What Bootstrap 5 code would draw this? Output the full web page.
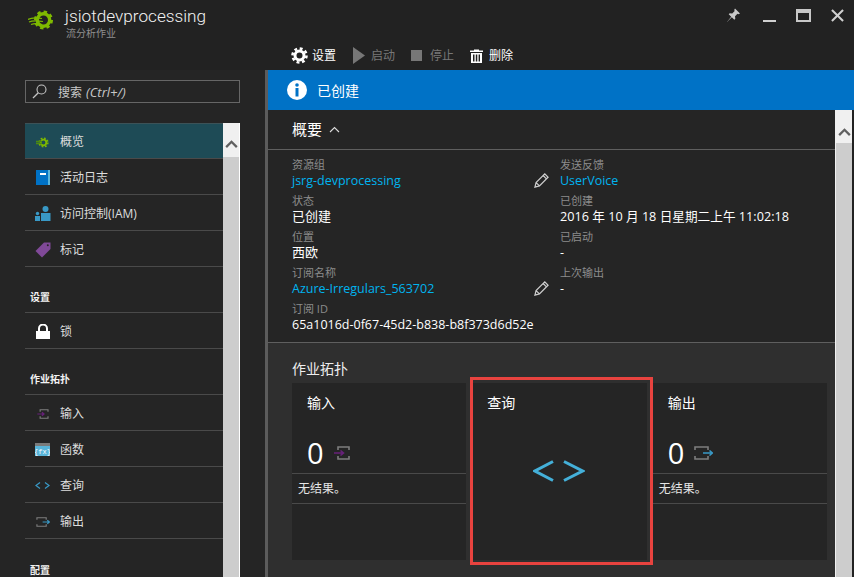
<!DOCTYPE html>
<html lang="zh-CN">
<head>
    <meta charset="UTF-8">
    <meta name="viewport" content="width=device-width, initial-scale=1.0">
    <title>jsiotdevprocessing</title>
    <link href="https://cdn.jsdelivr.net/npm/bootstrap@5.3.0/dist/css/bootstrap.min.css" rel="stylesheet">
    <style>
        html, body { height: 100%; overflow: hidden; }
        body {
            background: #222;
            color: #fff;
            font-family: "Open Sans", "Noto Sans CJK SC", sans-serif;
            font-size: 13px;
            line-height: 18px;
        }
        svg { display: block; flex: none; }

        .top-bar { height: 70px; }
        .title-row { height: 43px; padding: 10px 0 0 28px; }
        .res-name { font-family: Roboto, sans-serif; font-weight: 300; font-size: 17.2px; line-height: 22px; margin-left: 12px; margin-top: -5px; color: #f2f2f2; }
        .res-type { font-size: 10px; line-height: 12px; margin-left: 13px; color: #8f8f8f; }
        .win-btns { gap: 20px; padding: 0 10px 0 0; margin-top: -2px; }
        .win-pin { margin-right: 2px; }
        .cmd-row { height: 25px; padding-left: 291px; font-size: 12px; gap: 16px; }
        .cmd-off { color: #777; }
        .cmd-gap { gap: 6px; }
        .cmd-play { margin-left: 1px; }

        .side-col { width: 265px; padding-left: 25px; background: #252525; }
        .blade-rule { width: 3px; background: #5c5c5c; }
        .side-search {
            width: 215px; height: 23px; margin: 10px 0 20px;
            border: 1px solid #666; padding-left: 6px; font-size: 12px; color: #c8c8c8;
        }
        .side-search i { font-size: 13px; margin-left: 4px; }
        .search-text { padding-top: 1px; margin-left: 3px; }
        .side-body { width: 215px; }
        .side-list { width: 198px; flex-wrap: nowrap; }
        .side-list .list-group-item {
            background: transparent; color: #ddd; border: 0; border-bottom: 1px solid #4a4a4a;
            border-radius: 0; height: 36px; padding: 2px 0 0 5px; font-size: 12px; flex: none;
        }
        .side-list .list-group-item.active { background: #1e4b56; border-top: 1px solid #3c5257; height: 36px; }
        .side-list .side-head {
            height: 46px; padding: 0 0 6px 5px; font-size: 10px; font-weight: 700; color: #f2f2f2;
        }
        .side-icon { width: 25px; margin-right: 5px; }
        .scroll-rail { width: 17px; background: #cdcdcd; border-right: 1px solid #fff; }
        .scroll-cap { background: #f0f0f0; }
        .side-rail .scroll-cap { height: 34px; padding-top: 17px; }
        .main-rail { margin-right: 2px; border-left: 1px solid #f0f0f0; border-right: 0; }
        .main-rail .scroll-cap { height: 33px; padding-top: 18px; }

        .info-bar { height: 40px; background: #0072c6; padding-left: 19px; font-size: 14px; gap: 10px; }
        .info-text { padding-top: 2px; }
        .main-pane { background: #252525; }
        .sum-head { height: 40px; padding: 0 0 1px 24px; border-bottom: 1px solid #5f5f5f; font-size: 15px; gap: 7px; }
        .sum-body { height: 193px; padding: 6px 0 0 24px; border-bottom: 1px solid #5f5f5f; }
        .sum-left { width: 268px; padding-right: 11px; }
        .field-label { font-size: 11px; line-height: 17px; color: #8c8c8c; height: 16px; }
        .field-value { height: 20px; line-height: 17px; font-size: 12.5px; white-space: nowrap; }
        .field-cjk { font-size: 13px; }
        .field-date { font-size: 12.67px; }
        .azure-link { color: #00b4f0; text-decoration: none; }
        .edit-icon { margin-top: 1px; }

        .topo-pane { background: #2f2f2f; padding: 17px 0 0 24px; }
        .topo-title { font-size: 14px; margin-bottom: 5px; color: #eee; }
        .topo-tiles { width: 535px; height: 177px; gap: 6px; }
        .topo-tile { flex: 1 1 0; background: #252525; }
        .tile-name { font-size: 14px; padding: 11px 0 0 15px; }
        .tile-count { height: 61px; padding-left: 15px; font-size: 29px; gap: 10px; padding-top: 21px; color: #fff; }
        .tile-empty { margin-top: 0; height: 31px; padding-left: 6px; font-size: 12px; color: #e6e6e6; border-top: 1px solid #4a4a4a; border-bottom: 1px solid #4a4a4a; }
        .query-mark { height: 118px; }
        .red-box {
            position: absolute; left: 178px; top: -6px; width: 183px; height: 188px;
            border: 3px solid #e8433f; pointer-events: none;
        }
    </style>
</head>
<body class="d-flex flex-column">
    <svg width="0" height="0" class="position-absolute">
        <defs>
            <symbol id="ico-pencil" viewBox="0 0 16 16">
                <path d="M1 15l1.200-4.800L11.500 1 15 4.500 5.800 13.800zM2.200 10.200l3.600 3.600M9.800 2.700l3.500 3.500" fill="none" stroke="#cfcfcf" stroke-width="1.300"/>
            </symbol>
            <symbol id="ico-input" viewBox="0 0 16 14">
                <path d="M4 4V1h11v3M4 10v3h11v-3" fill="none" stroke="#7d7d7d" stroke-width="1.600"/>
                <path d="M0 7h9M6.500 4.500L9.500 7l-3 2.500" fill="none" stroke="#68217a" stroke-width="1.600"/>
            </symbol>
            <symbol id="ico-output" viewBox="0 0 19 14">
                <path d="M14 4V1H1v3M1 10v3h13v-3" fill="none" stroke="#7d7d7d" stroke-width="1.600"/>
                <path d="M9 7h9M15.500 4.500L18.500 7l-3 2.500" fill="none" stroke="#3999c6" stroke-width="1.600"/>
            </symbol>
            <symbol id="ico-up" viewBox="0 0 14 9">
                <path d="M1 8l6-6 6 6" fill="none" stroke="#606060" stroke-width="2.600"/>
            </symbol>
        </defs>
    </svg>

    <header class="top-bar flex-shrink-0">
        <div class="title-row d-flex align-items-start">
            <svg width="25" height="20" viewBox="0 0 25 20">
                <circle cx="15.500" cy="10" r="6.200" fill="none" stroke="#7fba00" stroke-width="3.400"/>
                <circle cx="15.500" cy="10" r="8.300" fill="none" stroke="#7fba00" stroke-width="2.400" stroke-dasharray="3.400 3.100"/>
                <path d="M0 9.500c4-2.500 8-2 14-1M1 12c4-2 8-1.500 14-.5M3 14.500c4-1.500 7-1 11 0" fill="none" stroke="#7fba00" stroke-width="1.200"/>
            </svg>
            <div class="flex-grow-1">
                <div class="res-name">jsiotdevprocessing</div>
                <div class="res-type">流分析作业</div>
            </div>
            <div class="win-btns d-flex align-items-center">
                <svg class="win-pin" width="15" height="15" viewBox="0 0 15 15">
                    <path d="M9 .500l5 5-1.500.8-1-.5-2.500 2.500.3 2.500-1 1-2.500-2.500L1 14l4.200-5.300-2.500-2.500 1-1 2.500.3L8.700 3l-.5-1z" fill="#c8c8c8"/>
                </svg>
                <svg width="13" height="15" viewBox="0 0 13 15"><path d="M0 12h13v2H0z" fill="#d0d0d0"/></svg>
                <svg width="15" height="13" viewBox="0 0 15 13"><path fill-rule="evenodd" d="M0 0h15v13H0zM2 4v7h11V4z" fill="#c8c8c8"/></svg>
                <svg width="13" height="13" viewBox="0 0 14 14"><path d="M1 1l12 12M13 1L1 13" stroke="#d0d0d0" stroke-width="2.200"/></svg>
            </div>
        </div>
        <div class="cmd-row d-flex align-items-center">
            <span class="d-flex align-items-center gap-1">
                <svg width="17" height="17" viewBox="0 0 17 17">
                    <circle cx="8.500" cy="8.500" r="4.500" fill="none" stroke="#fff" stroke-width="3"/>
                    <circle cx="8.500" cy="8.500" r="7" fill="none" stroke="#fff" stroke-width="2.600" stroke-dasharray="2.900 2.600"/>
                </svg>
                设置
            </span>
            <span class="d-flex align-items-center cmd-gap cmd-off cmd-play">
                <svg width="12" height="17" viewBox="0 0 12 17"><path d="M0 0l12 8.500L0 17z" fill="#777"/></svg>
                启动
            </span>
            <span class="d-flex align-items-center gap-2 cmd-off">
                <svg width="11" height="11" viewBox="0 0 11 11"><path d="M0 0h11v11H0z" fill="#777"/></svg>
                停止
            </span>
            <span class="d-flex align-items-center cmd-gap">
                <svg width="13" height="14" viewBox="0 0 13 14">
                    <path d="M4 1.500V.500h5v1h4v1.500H0V1.500zM1 4h11v10H1zM3 5.500v7h1.500v-7zM5.800 5.500v7h1.500v-7zM8.600 5.500v7H10v-7z" fill="#fff" fill-rule="evenodd"/>
                </svg>
                删除
            </span>
        </div>
    </header>

    <div class="d-flex flex-grow-1 overflow-hidden">
        <aside class="side-col flex-shrink-0 d-flex flex-column">
            <div class="side-search d-flex align-items-center flex-shrink-0">
                <svg width="15" height="15" viewBox="0 0 15 15" class="me-2">
                    <circle cx="9.500" cy="5.500" r="4.500" fill="none" stroke="#c4c4c4" stroke-width="1.100"/>
                    <path d="M6.300 8.700L1 14" stroke="#c4c4c4" stroke-width="1.300"/>
                </svg>
                <span class="search-text">搜索<i>(Ctrl+/)</i></span>
            </div>
            <div class="side-body d-flex flex-grow-1 overflow-hidden">
                <div class="side-list list-group list-group-flush flex-shrink-0">
                    <a class="list-group-item active d-flex align-items-center">
                        <span class="side-icon d-flex justify-content-center">
                            <svg width="13" height="11" viewBox="0 0 13 11">
                                <circle cx="7.500" cy="5.500" r="2.800" fill="none" stroke="#7fba00" stroke-width="1.800"/>
                                <circle cx="7.500" cy="5.500" r="4.400" fill="none" stroke="#7fba00" stroke-width="1.400" stroke-dasharray="1.800 1.650"/>
                                <path d="M0 4.500h6M0 6.500h6" stroke="#4c8a10" stroke-width="1.300"/>
                            </svg>
                        </span>概览
                    </a>
                    <a class="list-group-item d-flex align-items-center">
                        <span class="side-icon d-flex justify-content-center">
                            <svg width="14" height="15" viewBox="0 0 14 15">
                                <path d="M0 0h14v15H0z" fill="#0072c6"/>
                                <path d="M12 0h2v15h-2z" fill="#59b4d9"/>
                                <path d="M4 3h6v2H4z" fill="#fff"/>
                            </svg>
                        </span>活动日志
                    </a>
                    <a class="list-group-item d-flex align-items-center">
                        <span class="side-icon d-flex justify-content-center">
                            <svg width="16" height="15" viewBox="0 0 16 15">
                                <circle cx="10.500" cy="3" r="3" fill="#3999c6"/>
                                <path d="M6 7h9.500v8H6zM10 7h1.500l-.7 3z" fill="#3999c6"/>
                                <circle cx="2.500" cy="7.500" r="1.700" fill="#3999c6"/>
                                <path d="M0 10h5v5H0z" fill="#3999c6"/>
                            </svg>
                        </span>访问控制(IAM)
                    </a>
                    <a class="list-group-item d-flex align-items-center">
                        <span class="side-icon d-flex justify-content-center">
                            <svg width="16" height="16" viewBox="0 0 16 16">
                                <path d="M9 .500h6.500V7L7 15.500.500 9z" fill="#804998"/>
                                <circle cx="12.800" cy="3.200" r="1" fill="#252525"/>
                            </svg>
                        </span>标记
                    </a>
                    <div class="list-group-item side-head d-flex align-items-end">设置</div>
                    <a class="list-group-item d-flex align-items-center">
                        <span class="side-icon d-flex justify-content-center">
                            <svg width="14" height="15" viewBox="0 0 14 15">
                                <path d="M3 7V4.500a4 4 0 0 1 8 0V7" fill="none" stroke="#fff" stroke-width="2"/>
                                <path d="M0 7h14v8H0z" fill="#fff"/>
                            </svg>
                        </span>锁
                    </a>
                    <div class="list-group-item side-head d-flex align-items-end">作业拓扑</div>
                    <a class="list-group-item d-flex align-items-center">
                        <span class="side-icon d-flex justify-content-center">
                            <svg width="12" height="10"><use href="#ico-input"/></svg>
                        </span>输入
                    </a>
                    <a class="list-group-item d-flex align-items-center">
                        <span class="side-icon d-flex justify-content-center">
                            <svg width="15" height="13" viewBox="0 0 15 13">
                                <path d="M0 0h15v3H0z" fill="#7a7a7a"/>
                                <path d="M0 3h15v10H0z" fill="#59b4d9"/>
                                <text x="7.500" y="10.500" font-size="7" fill="#fff" text-anchor="middle" font-family="Liberation Mono, monospace">{fx}</text>
                            </svg>
                        </span>函数
                    </a>
                    <a class="list-group-item d-flex align-items-center">
                        <span class="side-icon d-flex justify-content-center">
                            <svg width="15" height="7" viewBox="0 0 15 7">
                                <path d="M5 .500L1 3.500l4 3M10 .500l4 3-4 3" fill="none" stroke="#3999c6" stroke-width="1.200"/>
                            </svg>
                        </span>查询
                    </a>
                    <a class="list-group-item d-flex align-items-center">
                        <span class="side-icon d-flex justify-content-center">
                            <svg width="14" height="10"><use href="#ico-output"/></svg>
                        </span>输出
                    </a>
                    <div class="list-group-item side-head d-flex align-items-end border-0">配置</div>
                </div>
                <div class="scroll-rail side-rail flex-shrink-0">
                    <div class="scroll-cap d-flex justify-content-center">
                        <svg width="13" height="8"><use href="#ico-up"/></svg>
                    </div>
                </div>
            </div>
        </aside>
        <div class="blade-rule flex-shrink-0"></div>

        <main class="flex-grow-1 d-flex flex-column overflow-hidden">
            <div class="info-bar d-flex align-items-center flex-shrink-0">
                <svg width="20" height="20" viewBox="0 0 20 20">
                    <circle cx="10" cy="10" r="10" fill="#fff"/>
                    <path d="M8.500 8h3v8.500h-3z" fill="#0072c6"/>
                    <circle cx="10" cy="5" r="1.800" fill="#0072c6"/>
                </svg>
                <span class="info-text">已创建</span>
            </div>
            <div class="d-flex flex-grow-1 overflow-hidden">
                <div class="flex-grow-1 d-flex flex-column main-pane">
                    <div class="sum-head d-flex align-items-center flex-shrink-0">
                        概要
                        <svg width="11" height="7" viewBox="0 0 11 7"><path d="M1 6l4.500-4.500L10 6" fill="none" stroke="#ddd" stroke-width="1.100"/></svg>
                    </div>
                    <div class="sum-body d-flex flex-shrink-0">
                        <div class="sum-left flex-shrink-0">
                            <div class="field-label">资源组</div>
                            <div class="field-value d-flex justify-content-between align-items-start">
                                <a class="azure-link" href="#">jsrg-devprocessing</a>
                                <svg class="edit-icon" width="15" height="15"><use href="#ico-pencil"/></svg>
                            </div>
                            <div class="field-label">状态</div>
                            <div class="field-value field-cjk">已创建</div>
                            <div class="field-label">位置</div>
                            <div class="field-value field-cjk">西欧</div>
                            <div class="field-label">订阅名称</div>
                            <div class="field-value d-flex justify-content-between align-items-start">
                                <a class="azure-link" href="#">Azure-Irregulars_563702</a>
                                <svg class="edit-icon" width="15" height="15"><use href="#ico-pencil"/></svg>
                            </div>
                            <div class="field-label">订阅 ID</div>
                            <div class="field-value">65a1016d-0f67-45d2-b838-b8f373d6d52e</div>
                        </div>
                        <div>
                            <div class="field-label">发送反馈</div>
                            <div class="field-value"><a class="azure-link" href="#">UserVoice</a></div>
                            <div class="field-label">已创建</div>
                            <div class="field-value field-date">2016 年 10 月 18 日星期二上午 11:02:18</div>
                            <div class="field-label">已启动</div>
                            <div class="field-value">-</div>
                            <div class="field-label">上次输出</div>
                            <div class="field-value">-</div>
                        </div>
                    </div>
                    <div class="topo-pane flex-grow-1">
                        <div class="topo-title">作业拓扑</div>
                        <div class="topo-tiles d-flex position-relative">
                            <div class="topo-tile">
                                <div class="tile-name">输入</div>
                                <div class="tile-count d-flex align-items-center">0 <svg width="16" height="14"><use href="#ico-input"/></svg></div>
                                <div class="tile-empty d-flex align-items-center">无结果。</div>
                            </div>
                            <div class="topo-tile">
                                <div class="tile-name">查询</div>
                                <div class="query-mark d-flex justify-content-center align-items-center">
                                    <svg width="52" height="22" viewBox="0 0 52 22">
                                        <path d="M20 1.500L2 11l18 9.500M31 1.500L49.500 11 31 20.500" fill="none" stroke="#44b0d9" stroke-width="3"/>
                                    </svg>
                                </div>
                            </div>
                            <div class="topo-tile">
                                <div class="tile-name">输出</div>
                                <div class="tile-count d-flex align-items-center">0 <svg width="19" height="14"><use href="#ico-output"/></svg></div>
                                <div class="tile-empty d-flex align-items-center">无结果。</div>
                            </div>
                            <div class="red-box"></div>
                        </div>
                    </div>
                </div>
                <div class="scroll-rail main-rail flex-shrink-0">
                    <div class="scroll-cap d-flex justify-content-center">
                        <svg width="13" height="8"><use href="#ico-up"/></svg>
                    </div>
                </div>
            </div>
        </main>
    </div>
    <script src="https://cdn.jsdelivr.net/npm/bootstrap@5.3.0/dist/js/bootstrap.bundle.min.js"></script>
</body>
</html>
